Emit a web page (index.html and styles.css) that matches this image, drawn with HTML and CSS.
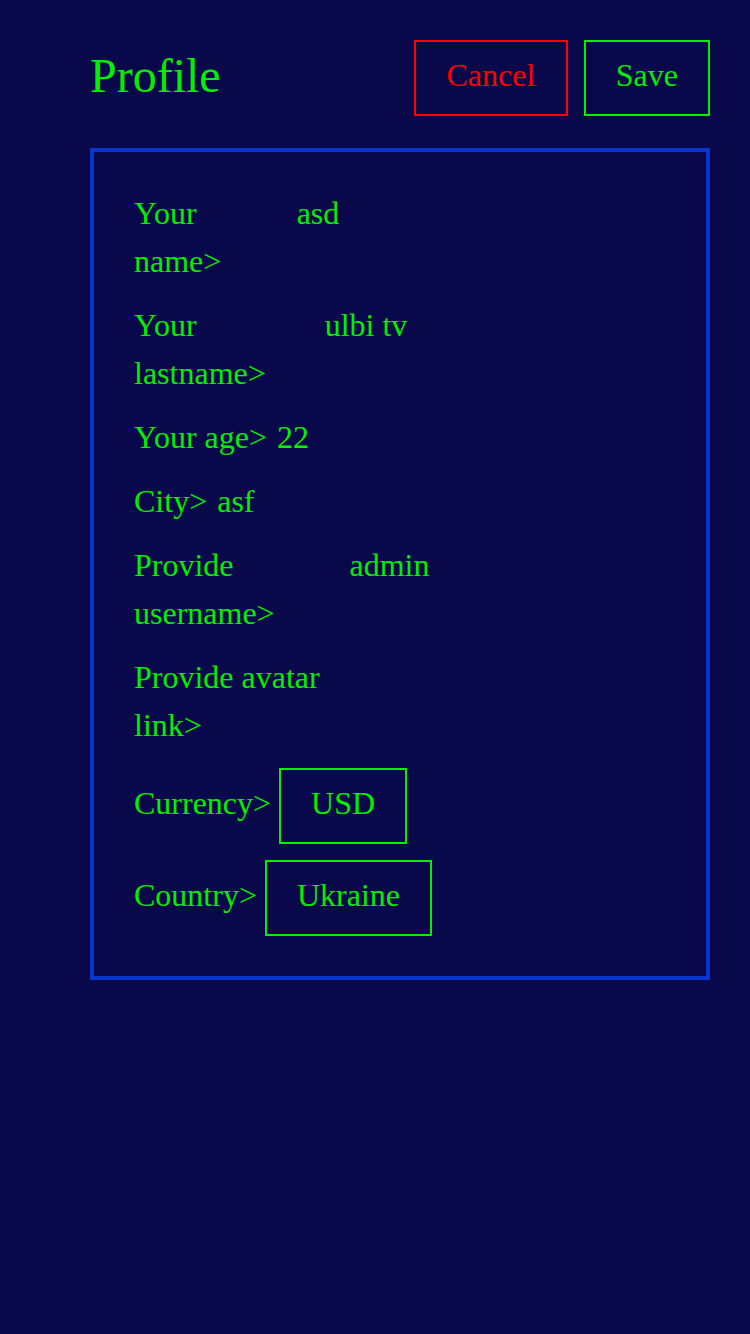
FILE: index.html
```html
<!DOCTYPE html>
<html lang="en">
<head>
<meta charset="utf-8">
<title>Profile</title>
<link rel="stylesheet" href="styles.css">
</head>
<body>
<div class="page">
  <header class="header">
    <h1 class="title">Profile</h1>
    <div class="actions">
      <button class="btn btn-cancel" type="button">Cancel</button>
      <button class="btn btn-save" type="button">Save</button>
    </div>
  </header>
  <section class="card">
    <div class="field">
      <label class="label" for="f-name">Your name&gt;</label>
      <input class="input" id="f-name" type="text" value="asd">
    </div>
    <div class="field">
      <label class="label" for="f-lastname">Your lastname&gt;</label>
      <input class="input" id="f-lastname" type="text" value="ulbi tv">
    </div>
    <div class="field">
      <label class="label" for="f-age">Your age&gt;</label>
      <input class="input" id="f-age" type="text" value="22">
    </div>
    <div class="field">
      <label class="label" for="f-city">City&gt;</label>
      <input class="input" id="f-city" type="text" value="asf">
    </div>
    <div class="field">
      <label class="label" for="f-username">Provide username&gt;</label>
      <input class="input" id="f-username" type="text" value="admin">
    </div>
    <div class="field">
      <label class="label" for="f-avatar">Provide avatar link&gt;</label>
      <input class="input" id="f-avatar" type="text" value="">
    </div>
    <div class="field field-select field-first-select">
      <span class="label label-select">Currency&gt;</span>
      <div class="select">USD</div>
    </div>
    <div class="field field-select">
      <span class="label label-select">Country&gt;</span>
      <div class="select">Ukraine</div>
    </div>
  </section>
</div>
</body>
</html>
```

FILE: styles.css
```css
html, body {
  margin: 0;
  padding: 0;
  background: #09084a;
  min-height: 100%;
}

body {
  font-family: "Liberation Serif", "Times New Roman", serif;
  color: #00f000;
}

.page {
  padding: 40px 40px 40px 90px;
}

.header {
  display: flex;
  align-items: center;
  justify-content: space-between;
  height: 76px;
}

.title {
  margin: 0;
  padding-bottom: 4px;
  font-size: 48px;
  font-weight: normal;
  line-height: 72px;
  color: #00f000;
}

.actions {
  display: flex;
  gap: 16px;
}

.btn {
  font-family: inherit;
  font-size: 32px;
  line-height: 48px;
  padding: 9px 30px 15px;
  background: transparent;
  border: 2px solid;
  margin: 0;
  cursor: pointer;
}

.btn-cancel {
  color: #ff0000;
  border-color: #ff0000;
  padding-left: 30.5px;
  padding-right: 30.5px;
}

.btn-save {
  color: #00f000;
  border-color: #00f000;
}

.card {
  margin-top: 32px;
  border: 4px solid #0436cc;
  padding: 37px 40px 40px;
  display: flex;
  flex-direction: column;
  gap: 16px;
}

.field {
  display: flex;
  align-items: flex-start;
  gap: 8px;
  font-size: 32px;
  line-height: 48px;
}

.label {
  flex: 0 1 auto;
  color: #00f000;
}

.input {
  flex: 0 1 384px;
  min-width: 0;
  box-sizing: border-box;
  height: 48px;
  padding: 0 2px;
  margin: 0;
  border: none;
  outline: none;
  background: transparent;
  color: #00f000;
  font-family: inherit;
  font-size: 32px;
  line-height: 48px;
}

.field-select {
  align-items: center;
}

.field-first-select {
  margin-top: 3px;
}

.label-select {
  padding-bottom: 6px;
}

.select {
  border: 2px solid #00f000;
  padding: 9px 30px 15px;
  line-height: 48px;
  color: #00f000;
}
```
